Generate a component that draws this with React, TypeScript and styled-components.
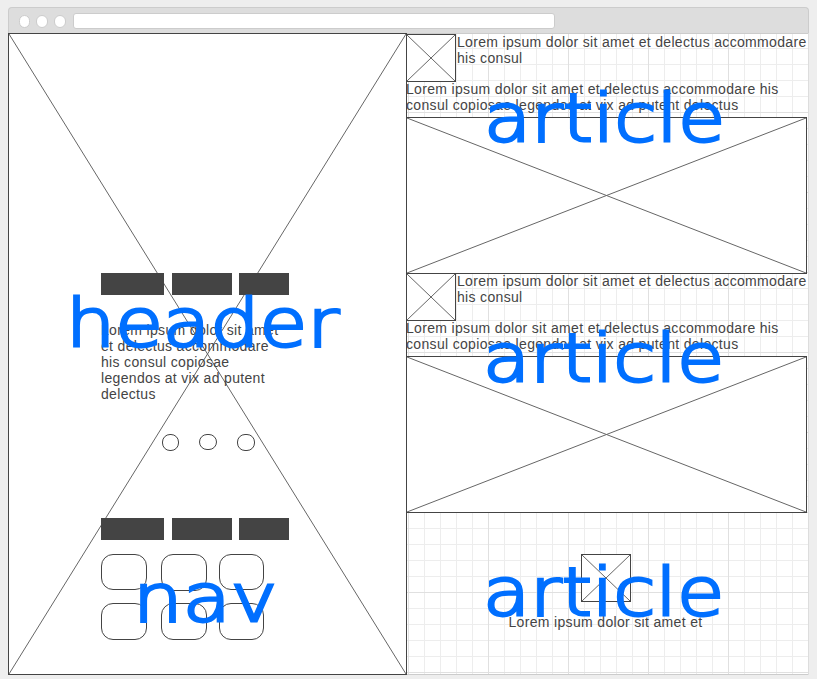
import React from "react";
import styled, { createGlobalStyle } from "styled-components";

const INK = "#444";

const GlobalStyle = createGlobalStyle`
  *, *::before, *::after { box-sizing: border-box; }
  html, body { margin: 0; background: #eee; overflow: hidden; }
  body { font: 14px/16px "Liberation Sans", Arial, sans-serif; color: ${INK}; }
`;

const Page = styled.div`
  width: 817px;
  height: 679px;
  padding: 7px 8px 0;
`;

const Toolbar = styled.div`
  display: flex;
  align-items: center;
  width: 801px;
  height: 26px;
  padding: 1px 10px 0;
  background: #ddd;
  border: 1px solid #ccc;
  border-bottom: 0;
  border-radius: 4px 4px 0 0;
`;

const WindowButton = styled.i<{ $w: number; $gap: number }>`
  width: ${(p) => p.$w}px;
  height: 13px;
  margin-right: ${(p) => p.$gap}px;
  background: #fff;
  border: 1px solid #ccc;
  border-radius: 6px;
`;

const AddressBar = styled.div`
  width: 482px;
  height: 16px;
  background: #fff;
  border: 1px solid #ccc;
  border-radius: 3px;
`;

const Canvas = styled.div`
  display: grid;
  grid-template-columns: 398px 401px;
  width: 801px;
  height: 642px;
  border-right: 1px solid #ddd;
  background-color: #fff;
  background-image:
    linear-gradient(90deg, #e0e0e0 1px, transparent 1px),
    linear-gradient(#e0e0e0 1px, transparent 1px),
    linear-gradient(90deg, #ededed 1px, transparent 1px),
    linear-gradient(#ededed 1px, transparent 1px);
  background-size: 80px 80px, 80px 80px, 16px 16px, 16px 16px;
  background-position: 0 0, 0 -1px, 0 0, 0 -1px;
  box-shadow: inset 0 -1px #ccc, inset 0 1px #ccc;
`;

const Frame = styled.div<{ $w: number; $h: number }>`
  position: relative;
  flex: none;
  width: ${(p) => p.$w}px;
  height: ${(p) => p.$h}px;
  background: #fff;
  border: 1px solid ${INK};
`;

const CrossSvg = styled.svg`
  position: absolute;
  inset: 0;
  width: 100%;
  height: 100%;
  stroke: #666;
  stroke-width: 1;
`;

const Cross = () => (
  <CrossSvg>
    <line x1="0" y1="0" x2="100%" y2="100%" />
    <line x1="100%" y1="0" x2="0" y2="100%" />
  </CrossSvg>
);

const HeaderContent = styled.div`
  position: relative;
  display: flex;
  flex-direction: column;
  padding: 239px 0 0 92px;
`;

const Bars = styled.div`
  display: grid;
  grid-template-columns: 63px 60px 50px;
  column-gap: 8px;
  height: 22px;
`;

const Bar = styled.span<{ $pull?: boolean }>`
  background: ${INK};
  margin-left: ${(p) => (p.$pull ? -1 : 0)}px;
  margin-right: ${(p) => (p.$pull ? 1 : 0)}px;
`;

const Text = styled.p`
  margin: 0;
  letter-spacing: 0.33px;
`;

const HeaderText = styled(Text)`
  width: 188px;
  margin-top: 27px;
`;

const Dots = styled.div`
  display: flex;
  height: 17px;
  margin: 32px 0 67px 61px;
`;

const Dot = styled.span<{ $w: number; $h: number }>`
  width: ${(p) => p.$w}px;
  height: ${(p) => p.$h}px;
  margin-right: 20px;
  border: 1px solid ${INK};
  border-radius: 8px;
`;

const Tiles = styled.div`
  display: grid;
  grid-template-columns: 46px 46px 45px;
  grid-template-rows: 37px 37px;
  align-items: start;
  column-gap: 14px;
  row-gap: 12px;
  margin-top: 14px;
`;

const Tile = styled.span<{ $h: number; $shift: number }>`
  height: ${(p) => p.$h}px;
  margin-left: ${(p) => p.$shift}px;
  margin-right: ${(p) => -p.$shift}px;
  border: 1px solid ${INK};
  border-radius: 12px;
`;

const Articles = styled.main`
  padding-top: 1px;
`;

const Article = styled.article`
  height: 239px;
`;

const Intro = styled.div`
  display: flex;
  gap: 1px;
  margin-bottom: -1px;
  white-space: nowrap;
`;

const Copy = styled(Text)`
  height: 36px;
  white-space: nowrap;
`;

const Footer = styled.article`
  display: flex;
  flex-direction: column;
  align-items: center;
  padding: 42px 2px 0 0;
`;

const FooterText = styled(Text)`
  margin-top: 12px;
`;

/* Section names lie over the wireframe. */
const Label = styled.span<{ $x: number; $y: number; $sx: number }>`
  position: absolute;
  left: ${(p) => p.$x}px;
  top: ${(p) => p.$y}px;
  font: 200 65px/70px "DejaVu Sans", sans-serif;
  color: #006fff;
  -webkit-text-stroke: 2.8px #006fff;
  transform: scaleX(${(p) => p.$sx});
  transform-origin: 0 0;
  white-space: nowrap;
`;

const BarRow = () => (
  <Bars>
    <Bar />
    <Bar />
    <Bar $pull />
  </Bars>
);

const tiles = [
  { h: 36, shift: 0 },
  { h: 37, shift: 0 },
  { h: 36, shift: -2 },
  { h: 37, shift: 0 },
  { h: 37, shift: 0 },
  { h: 37, shift: -2 },
];

export default function App() {
  return (
    <Page>
      <GlobalStyle />
      <Toolbar>
        <WindowButton $w={11} $gap={6} />
        <WindowButton $w={12} $gap={6} />
        <WindowButton $w={12} $gap={7} />
        <AddressBar />
      </Toolbar>
      <Canvas>
        <Frame as="header" $w={399} $h={642}>
          <Cross />
          <HeaderContent>
            <BarRow />
            <HeaderText>
              Lorem ipsum dolor sit amet et delectus accommodare his consul copiosae legendos at vix ad putent delectus
            </HeaderText>
            <Dots>
              <Dot $w={17} $h={17} />
              <Dot $w={18} $h={16} />
              <Dot $w={18} $h={17} />
            </Dots>
            <BarRow />
            <Tiles>
              {tiles.map((t, i) => (
                <Tile key={i} $h={t.h} $shift={t.shift} />
              ))}
            </Tiles>
          </HeaderContent>
        </Frame>
        <Articles>
          {[0, 1].map((n) => (
            <Article key={n}>
              <Intro>
                <Frame $w={50} $h={48}>
                  <Cross />
                </Frame>
                <Text>
                  Lorem ipsum dolor sit amet et delectus accommodare
                  <br />
                  his consul
                </Text>
              </Intro>
              <Copy>
                Lorem ipsum dolor sit amet et delectus accommodare his
                <br />
                consul copiosae legendos at vix ad putent delectus
              </Copy>
              <Frame $w={401} $h={157}>
                <Cross />
              </Frame>
            </Article>
          ))}
          <Footer>
            <Frame $w={50} $h={48}>
              <Cross />
            </Frame>
            <FooterText>Lorem ipsum dolor sit amet et</FooterText>
          </Footer>
        </Articles>
      </Canvas>
      <Label $x={66} $y={289} $sx={1.193}>header</Label>
      <Label $x={133} $y={564} $sx={1.205}>nav</Label>
      <Label $x={484} $y={84} $sx={1.183}>article</Label>
      <Label $x={483} $y={324} $sx={1.183}>article</Label>
      <Label $x={483} $y={558} $sx={1.183}>article</Label>
    </Page>
  );
}
